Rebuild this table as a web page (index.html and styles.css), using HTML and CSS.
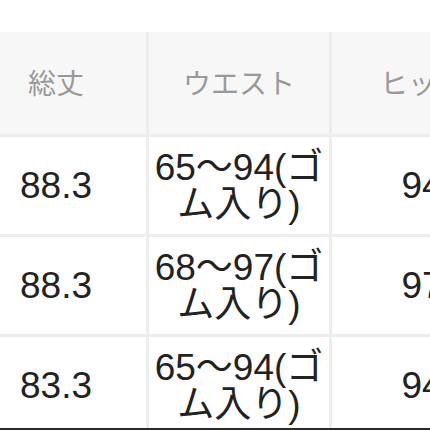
FILE: index.html
```html
<!DOCTYPE html>
<html lang="ja">
<head>
<meta charset="utf-8">
<link rel="stylesheet" href="styles.css">
</head>
<body>
<div class="frame">
  <div class="size-table">
    <div class="cell head">総丈</div>
    <div class="cell head">ウエスト</div>
    <div class="cell head">ヒップ</div>

    <div class="cell">88.3</div>
    <div class="cell">65〜94(ゴム入り)</div>
    <div class="cell">94</div>

    <div class="cell">88.3</div>
    <div class="cell">68〜97(ゴム入り)</div>
    <div class="cell">97</div>

    <div class="cell">83.3</div>
    <div class="cell">65〜94(ゴム入り)</div>
    <div class="cell">94</div>
  </div>
</div>
</body>
</html>
```
FILE: styles.css
```css
html, body {
  margin: 0;
  padding: 0;
  background: #ffffff;
}

.frame {
  width: 430px;
  height: 430px;
  box-sizing: border-box;
  padding-top: 32px;
  overflow: hidden;
  border-bottom: 2px solid #2b2b2b;
}

.size-table {
  display: grid;
  grid-template-columns: repeat(3, 180px);
  grid-template-rows: 102px 97px 97px 97px;
  gap: 3px;
  width: 546px;
  margin-left: -34px;
  background: #ededed;
  font-family: "Liberation Sans", "Noto Sans CJK JP", sans-serif;
}

.cell {
  display: flex;
  align-items: center;
  justify-content: center;
  text-align: center;
  background: #ffffff;
  color: #222222;
  font-size: 37px;
  line-height: 37px;
  padding: 0 2px;
  box-sizing: border-box;
  line-break: strict;
}

.head {
  background: #f7f7f7;
  color: #999999;
  font-size: 28px;
  line-height: 1.2;
  font-family: "Noto Sans CJK JP", sans-serif;
}
```
